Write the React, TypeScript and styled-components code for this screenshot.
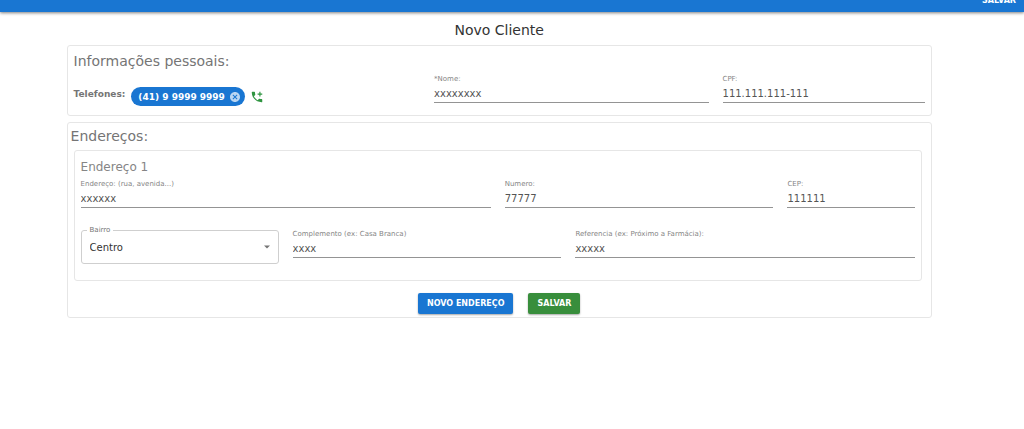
import React from 'react';
import styled, { createGlobalStyle } from 'styled-components';

const GlobalStyle = createGlobalStyle`
  *, *::before, *::after { box-sizing: border-box; }
  body {
    margin: 0;
    background: #fff;
    color: #333;
    font-family: Verdana, "DejaVu Sans", sans-serif;
  }
  h1, h2, h3 { margin: 0; font-weight: 400; }
  button, input, select { font-family: inherit; }
`;

const Page = styled.div`
  display: flow-root;
`;

const AppBar = styled.header`
  display: flex;
  align-items: center;
  justify-content: flex-end;
  height: 24px;
  margin-top: -12px;
  padding: 2px 8px 0;
  background: #1976d2;
  box-shadow: 0 1px 3px rgba(0, 0, 0, 0.5);
`;

const AppBarButton = styled.button`
  padding: 0;
  border: 0;
  background: none;
  color: #fff;
  font-size: 8px;
  line-height: 12px;
  font-weight: 700;
  text-transform: uppercase;
`;

const Main = styled.main`
  display: flex;
  flex-direction: column;
  gap: 6px;
  margin: 0 9% 0 6.5%;
  padding-top: 9px;
`;

const PageTitle = styled.h1`
  font-size: 14px;
  line-height: 18px;
  text-align: center;
`;

const Card = styled.section`
  padding: 6px 6px 5px;
  border: 1px solid #e6e6e6;
  border-radius: 3px;
`;

const AddressesCard = styled(Card)`
  padding: 4px 6px 3px;
`;

const AddressCard = styled(Card)`
  margin: 5px 3px 0 0;
  padding: 8px 6px 16px;
`;

const SectionTitle = styled.h2`
  color: #757575;
  font-size: 14px;
  line-height: 18px;
`;

const OuterTitle = styled(SectionTitle)`
  margin-left: -3px;
`;

const AddressTitle = styled.h3`
  color: #858585;
  font-size: 12px;
  line-height: 16px;
`;

const Row = styled.div<{ $spaced?: boolean }>`
  display: grid;
  grid-template-columns: repeat(12, minmax(0, 1fr));
  column-gap: 14px;
  margin-top: ${(p) => (p.$spaced ? 22 : 5)}px;
`;

const Cell = styled.div<{ $span: number }>`
  grid-column: span ${(p) => p.$span};
  min-width: 0;
`;

const FieldLabel = styled.label`
  display: block;
  color: #858585;
  font-size: 7px;
  line-height: 9px;
`;

const FieldInput = styled.input`
  display: block;
  width: 100%;
  height: 19px;
  padding: 0;
  border: 0;
  border-bottom: 1px solid #949494;
  border-radius: 0;
  outline: 0;
  background: transparent;
  color: #555;
  font-size: 10px;
`;

const Phones = styled.div`
  display: flex;
  align-items: center;
  height: 35px;
  padding-top: 8px;
`;

const PhonesLabel = styled.span`
  padding-bottom: 5px;
  color: #757575;
  font-size: 9px;
  line-height: 12px;
  font-weight: 700;
`;

const Chip = styled.span`
  display: flex;
  align-items: center;
  gap: 4px;
  height: 19px;
  margin-left: 6px;
  padding: 0 4px 0 7px;
  border-radius: 10px;
  background: #1976d2;
  color: #fff;
  font-size: 9px;
  font-weight: 700;
  white-space: nowrap;
`;

const IconButton = styled.button`
  display: flex;
  padding: 0;
  border: 0;
  background: none;
`;

const AddPhone = styled(IconButton)`
  margin-left: 5px;
`;

const SelectBox = styled.div`
  position: relative;
  height: 34px;
`;

const SelectLabel = styled.label`
  position: absolute;
  top: -4px;
  left: 6px;
  padding: 0 3px;
  background: #fff;
  color: #757575;
  font-size: 7px;
  line-height: 8px;
`;

const Select = styled.select`
  width: 100%;
  height: 100%;
  padding: 0 24px 0 8px;
  border: 1px solid #cfcfcf;
  border-radius: 3px;
  appearance: none;
  background: transparent;
  color: #333;
  font-size: 10px;
`;

const SelectArrow = styled.svg`
  position: absolute;
  top: 15px;
  right: 9px;
  pointer-events: none;
`;

const Actions = styled.div`
  display: flex;
  justify-content: center;
  gap: 15px;
  margin-top: 12px;
`;

const Button = styled.button<{ $color: string }>`
  height: 21px;
  padding: 0 9px;
  border: 0;
  border-radius: 2px;
  background: ${(p) => p.$color};
  box-shadow: 0 1px 2px rgba(0, 0, 0, 0.35);
  color: #fff;
  font-size: 8px;
  font-weight: 700;
  text-transform: uppercase;
  white-space: nowrap;
`;

type FieldProps = { id: string; label: string; value: string; span: number };

function Field({ id, label, value, span }: FieldProps) {
  return (
    <Cell $span={span}>
      <FieldLabel htmlFor={id}>{label}</FieldLabel>
      <FieldInput id={id} defaultValue={value} />
    </Cell>
  );
}

export default function App() {
  return (
    <Page>
      <GlobalStyle />
      <AppBar>
        <AppBarButton type="button">Salvar</AppBarButton>
      </AppBar>
      <Main>
        <PageTitle>Novo Cliente</PageTitle>
        <Card>
          <SectionTitle>Informações pessoais:</SectionTitle>
          <Row>
            <Cell $span={5}>
              <Phones>
                <PhonesLabel>Telefones:</PhonesLabel>
                <Chip>
                  (41) 9 9999 9999
                  <IconButton type="button" aria-label="Remover telefone">
                    <svg width="12" height="12" viewBox="0 0 24 24" fill="#fff" fillOpacity="0.7">
                      <path d="M12 2C6.47 2 2 6.47 2 12s4.47 10 10 10 10-4.47 10-10S17.53 2 12 2zm5 13.59L15.59 17 12 13.41 8.41 17 7 15.59 10.59 12 7 8.41 8.41 7 12 10.59 15.59 7 17 8.41 13.41 12 17 15.59z" />
                    </svg>
                  </IconButton>
                </Chip>
                <AddPhone type="button" aria-label="Adicionar telefone">
                  <svg width="14" height="14" viewBox="0 0 24 24" fill="#2e9440">
                    <path d="M20 15.5c-1.25 0-2.45-.2-3.57-.57-.1-.03-.21-.05-.31-.05-.26 0-.51.1-.71.29l-2.2 2.2c-2.83-1.44-5.15-3.75-6.59-6.59l2.2-2.21c.28-.26.36-.65.25-1C8.7 6.45 8.5 5.25 8.5 4c0-.55-.45-1-1-1H4c-.55 0-1 .45-1 1 0 9.39 7.61 17 17 17 .55 0 1-.45 1-1v-3.5c0-.55-.45-1-1-1zM21 6h-3V3h-2v3h-3v2h3v3h2V8h3z" />
                  </svg>
                </AddPhone>
              </Phones>
            </Cell>
            <Field id="nome" label="*Nome:" value="xxxxxxxx" span={4} />
            <Field id="cpf" label="CPF:" value="111.111.111-111" span={3} />
          </Row>
        </Card>
        <AddressesCard>
          <OuterTitle>Endereços:</OuterTitle>
          <AddressCard as="div">
            <AddressTitle>Endereço 1</AddressTitle>
            <Row>
              <Field id="endereco" label="Endereço: (rua, avenida...)" value="xxxxxx" span={6} />
              <Field id="numero" label="Numero:" value="77777" span={4} />
              <Field id="cep" label="CEP:" value="111111" span={2} />
            </Row>
            <Row $spaced>
              <Cell $span={3}>
                <SelectBox>
                  <Select id="bairro" defaultValue="Centro">
                    <option>Centro</option>
                  </Select>
                  <SelectLabel htmlFor="bairro">Bairro</SelectLabel>
                  <SelectArrow width="6" height="4" viewBox="0 0 6 4" fill="#757575">
                    <path d="M0 0.5h6L3 3.5z" />
                  </SelectArrow>
                </SelectBox>
              </Cell>
              <Field id="complemento" label="Complemento (ex: Casa Branca)" value="xxxx" span={4} />
              <Field id="referencia" label="Referencia (ex: Próximo a Farmácia):" value="xxxxx" span={5} />
            </Row>
          </AddressCard>
          <Actions>
            <Button type="button" $color="#1976d2">Novo Endereço</Button>
            <Button type="submit" $color="#388e3c">Salvar</Button>
          </Actions>
        </AddressesCard>
      </Main>
    </Page>
  );
}
